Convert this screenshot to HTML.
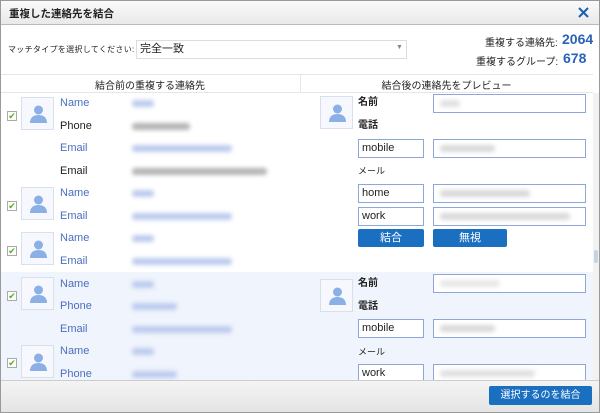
<!DOCTYPE html><html><head><meta charset="utf-8"><style>
*{box-sizing:border-box;margin:0;padding:0}
body{width:600px;height:413px;overflow:hidden;background:#fff;font-family:"Liberation Sans","Noto Sans CJK JP",sans-serif;font-size:11px;color:#222;position:relative}
.a{position:absolute}
.bl{position:absolute;height:7px;border-radius:3px;filter:blur(2px)}
.g{background:#b4b4b4}.b{background:#bccbee}
.lab{position:absolute;font-size:11px;line-height:12px}
.blu{color:#4a6fc0}
.av{position:absolute;width:33px;height:33px;border:1px solid #d8e0ee;background:#f6f8fd}
.av svg{position:absolute;left:7px;top:6px}
.cb{position:absolute;width:10px;height:10px;border:1px solid #aaa;background:#fff;font-size:9px;line-height:8px;color:#4caf20;text-align:center}
.in{position:absolute;height:19px;border:1px solid #8ea6d8;background:#fff;font-size:11px;line-height:17px;padding-left:3px}
.btn{position:absolute;background:#1a6fc0;color:#fff;text-align:center;font-size:11px;border-radius:2px}
</style></head><body>
<div class="a" style="left:0;top:0;width:600px;height:413px;border:1px solid #999"></div>
<div class="a" style="left:1px;top:1px;width:598px;height:24px;background:linear-gradient(#fafafa,#e9e9e9);border-bottom:1px solid #bbb"></div>
<div class="a" style="left:9px;top:6px;font-weight:bold;font-size:10.5px">重複した連絡先を結合</div>
<svg class="a" style="left:578px;top:7px" width="11" height="11" viewBox="0 0 11 11"><path d="M1 1L10 10M10 1L1 10" stroke="#1a5fb0" stroke-width="2"/></svg>
<div class="a" style="left:8px;top:44px;font-size:8px;letter-spacing:.3px">マッチタイプを選択してください:</div>
<div class="a" style="left:136px;top:40px;width:271px;height:19px;border:1px solid #ddd;font-size:11px;line-height:17px;padding-left:3px">完全一致</div>
<div class="a" style="left:396px;top:44px;font-size:7px;color:#888">▼</div>
<div class="a" style="left:485px;top:34px;font-size:10px">重複する連絡先:</div>
<div class="a" style="left:562px;top:31px;font-size:14px;font-weight:bold;color:#2a62b8">2064</div>
<div class="a" style="left:476px;top:53px;font-size:10px">重複するグループ:</div>
<div class="a" style="left:563px;top:50px;font-size:14px;font-weight:bold;color:#2a62b8">678</div>
<div class="a" style="left:1px;top:74px;width:592px;height:1px;background:#e6e6e6"></div>
<div class="a" style="left:1px;top:92px;width:592px;height:1px;background:#e6e6e6"></div>
<div class="a" style="left:300px;top:75px;width:1px;height:17px;background:#e6e6e6"></div>
<div class="a" style="left:0;top:77px;width:300px;text-align:center;font-size:10px">結合前の重複する連絡先</div>
<div class="a" style="left:300px;top:77px;width:293px;text-align:center;font-size:10px">結合後の連絡先をプレビュー</div>
<div class="a" style="left:1px;top:272px;width:592px;height:108px;background:#f0f4fc"></div>
<div class="a" style="left:593px;top:93px;width:6px;height:287px;background:#f2f2f2"></div>
<div class="a" style="left:594px;top:250px;width:4px;height:13px;background:#c8d2e4;border-radius:2px"></div>

<!-- left -->
<div class="cb" style="left:7px;top:111px">✔</div><div class="av" style="left:21px;top:97px"><svg width="19" height="19" viewBox="0 0 19 19"><circle cx="9.5" cy="6" r="4.5" fill="#8ab0e6"/><path d="M1 19c0-6 4-8 8.5-8s8.5 2 8.5 8z" fill="#8ab0e6"/></svg></div>
<div class="lab blu" style="left:60px;top:97px">Name</div><div class="bl b" style="left:132px;top:100px;width:22px"></div>
<div class="lab" style="left:60px;top:120px">Phone</div><div class="bl g" style="left:132px;top:123px;width:58px"></div>
<div class="lab blu" style="left:60px;top:142px">Email</div><div class="bl b" style="left:132px;top:145px;width:100px"></div>
<div class="lab" style="left:60px;top:165px">Email</div><div class="bl g" style="left:132px;top:168px;width:135px"></div>
<div class="cb" style="left:7px;top:201px">✔</div><div class="av" style="left:21px;top:187px"><svg width="19" height="19" viewBox="0 0 19 19"><circle cx="9.5" cy="6" r="4.5" fill="#8ab0e6"/><path d="M1 19c0-6 4-8 8.5-8s8.5 2 8.5 8z" fill="#8ab0e6"/></svg></div>
<div class="lab blu" style="left:60px;top:187px">Name</div><div class="bl b" style="left:132px;top:190px;width:22px"></div>
<div class="lab blu" style="left:60px;top:210px">Email</div><div class="bl b" style="left:132px;top:213px;width:100px"></div>
<div class="cb" style="left:7px;top:246px">✔</div><div class="av" style="left:21px;top:232px"><svg width="19" height="19" viewBox="0 0 19 19"><circle cx="9.5" cy="6" r="4.5" fill="#8ab0e6"/><path d="M1 19c0-6 4-8 8.5-8s8.5 2 8.5 8z" fill="#8ab0e6"/></svg></div>
<div class="lab blu" style="left:60px;top:232px">Name</div><div class="bl b" style="left:132px;top:235px;width:22px"></div>
<div class="lab blu" style="left:60px;top:255px">Email</div><div class="bl b" style="left:132px;top:258px;width:100px"></div>
<div class="cb" style="left:7px;top:291px">✔</div><div class="av" style="left:21px;top:277px"><svg width="19" height="19" viewBox="0 0 19 19"><circle cx="9.5" cy="6" r="4.5" fill="#8ab0e6"/><path d="M1 19c0-6 4-8 8.5-8s8.5 2 8.5 8z" fill="#8ab0e6"/></svg></div>
<div class="lab blu" style="left:60px;top:278px">Name</div><div class="bl b" style="left:132px;top:281px;width:22px"></div>
<div class="lab blu" style="left:60px;top:300px">Phone</div><div class="bl b" style="left:132px;top:303px;width:45px"></div>
<div class="lab blu" style="left:60px;top:323px">Email</div><div class="bl b" style="left:132px;top:326px;width:100px"></div>
<div class="cb" style="left:7px;top:358px">✔</div><div class="av" style="left:21px;top:345px"><svg width="19" height="19" viewBox="0 0 19 19"><circle cx="9.5" cy="6" r="4.5" fill="#8ab0e6"/><path d="M1 19c0-6 4-8 8.5-8s8.5 2 8.5 8z" fill="#8ab0e6"/></svg></div>
<div class="lab blu" style="left:60px;top:345px">Name</div><div class="bl b" style="left:132px;top:348px;width:22px"></div>
<div class="lab blu" style="left:60px;top:368px">Phone</div><div class="bl b" style="left:132px;top:371px;width:45px"></div>

<!-- right -->
<div class="av" style="left:320px;top:96px"><svg width="19" height="19" viewBox="0 0 19 19"><circle cx="9.5" cy="6" r="4.5" fill="#8ab0e6"/><path d="M1 19c0-6 4-8 8.5-8s8.5 2 8.5 8z" fill="#8ab0e6"/></svg></div>
<div class="lab" style="left:358px;top:97px;font-weight:bold;font-size:10px">名前</div>
<div class="in" style="left:433px;top:94px;width:153px"></div><div class="bl g" style="left:440px;top:100px;width:20px;opacity:.4"></div>
<div class="lab" style="left:358px;top:120px;font-weight:bold;font-size:10px">電話</div>
<div class="in" style="left:358px;top:139px;width:66px">mobile</div>
<div class="in" style="left:433px;top:139px;width:153px"></div><div class="bl g" style="left:440px;top:145px;width:55px;opacity:.5"></div>
<div class="lab" style="left:358px;top:165px;font-size:9px">メール</div>
<div class="in" style="left:358px;top:184px;width:66px">home</div>
<div class="in" style="left:433px;top:184px;width:153px"></div><div class="bl g" style="left:440px;top:190px;width:90px;opacity:.5"></div>
<div class="in" style="left:358px;top:207px;width:66px">work</div>
<div class="in" style="left:433px;top:207px;width:153px"></div><div class="bl g" style="left:440px;top:213px;width:130px;opacity:.5"></div>
<div class="btn" style="left:358px;top:229px;width:66px;height:18px;line-height:18px">結合</div>
<div class="btn" style="left:433px;top:229px;width:74px;height:18px;line-height:18px">無視</div>
<div class="av" style="left:320px;top:279px"><svg width="19" height="19" viewBox="0 0 19 19"><circle cx="9.5" cy="6" r="4.5" fill="#8ab0e6"/><path d="M1 19c0-6 4-8 8.5-8s8.5 2 8.5 8z" fill="#8ab0e6"/></svg></div>
<div class="lab" style="left:358px;top:278px;font-weight:bold;font-size:10px">名前</div>
<div class="in" style="left:433px;top:274px;width:153px"></div><div class="bl g" style="left:440px;top:280px;width:60px;opacity:.3"></div>
<div class="lab" style="left:358px;top:301px;font-weight:bold;font-size:10px">電話</div>
<div class="in" style="left:358px;top:319px;width:66px">mobile</div>
<div class="in" style="left:433px;top:319px;width:153px"></div><div class="bl g" style="left:440px;top:325px;width:55px;opacity:.5"></div>
<div class="lab" style="left:358px;top:346px;font-size:9px">メール</div>
<div class="in" style="left:358px;top:364px;width:66px">work</div>
<div class="in" style="left:433px;top:364px;width:153px"></div><div class="bl g" style="left:440px;top:370px;width:95px;opacity:.4"></div>

<div class="a" style="left:1px;top:380px;width:598px;height:32px;background:linear-gradient(#f4f4f4,#e4e4e4);border-top:1px solid #ccc"></div>
<div class="btn" style="left:489px;top:386px;width:103px;height:19px;line-height:19px;font-size:10px">選択するのを結合</div>
</body></html>
